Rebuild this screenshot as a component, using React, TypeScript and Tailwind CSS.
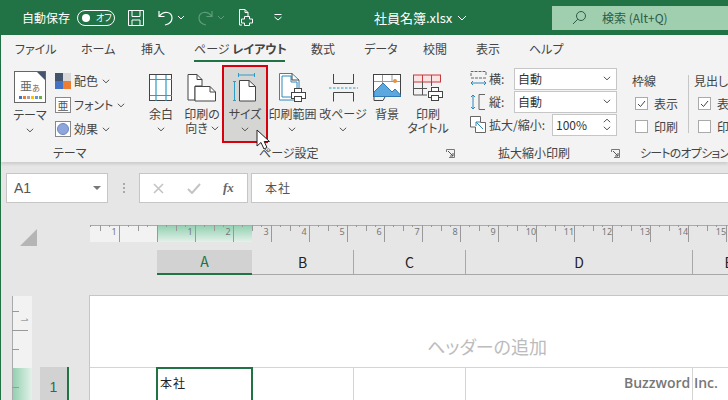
import type { ReactNode } from 'react';

const FONT = 'font-["Noto_Sans_CJK_JP","Noto_Sans",sans-serif] [font-feature-settings:"palt"]';

function Chevron({ className = '' }: { className?: string }) {
  return (
    <svg width="8" height="5" viewBox="0 0 8 5" className={className}>
      <polyline points="0.8,0.8 4,3.8 7.2,0.8" fill="none" stroke="#555" strokeWidth="1" />
    </svg>
  );
}

function Launcher() {
  return (
    <svg width="9" height="9" viewBox="0 0 9 9" className="ml-auto">
      <path d="M0.5 3V0.5H8.5V8.5H3" fill="none" stroke="#777" />
      <path d="M2 2L7 7M7 4V7H4" fill="none" stroke="#555" />
    </svg>
  );
}

function Stroke({ children, w, h }: { children: ReactNode; w: number; h: number }) {
  return (
    <svg width={w} height={h} viewBox={`0 0 ${w} ${h}`} fill="none">
      {children}
    </svg>
  );
}

function MarginIcon() {
  return (
    <Stroke w={24} h={28}>
      <rect x="0.5" y="0.5" width="22" height="26" fill="#fff" stroke="#444" />
      <path d="M7 1V27M17 1V27M1 5.5H23M1 21.5H23" stroke="#2e9cc4" strokeWidth="1.2" />
    </Stroke>
  );
}

function OrientIcon() {
  return (
    <Stroke w={30} h={28}>
      <path d="M1 0.5H10L15 5.5V12H8V26H1Z" fill="#fff" stroke="#444" />
      <path d="M8 12.5H23L28.5 18V27H8Z" fill="#fff" stroke="#444" />
      <path d="M10 0.5V5.5H15M23 12.5V18H28.5" stroke="#444" />
    </Stroke>
  );
}

function SizeIcon() {
  return (
    <Stroke w={24} h={29}>
      <path d="M5.5 0V4M21.5 0V4M5.5 2H21.5" stroke="#2e9cc4" />
      <path d="M1.5 8V28M0 8.5H3M0 27.5H3" stroke="#2e9cc4" />
      <path d="M6.5 7.5H16L22.5 13.5V28H6.5Z" fill="#fff" stroke="#444" />
      <path d="M16 7.5V13.5H22.5" stroke="#444" />
    </Stroke>
  );
}

function PrinterGlyph({ x, y }: { x: number; y: number }) {
  return (
    <g transform={`translate(${x} ${y})`}>
      <rect x="3.5" y="0.5" width="7" height="4" fill="#fff" stroke="#444" />
      <rect x="0.5" y="4.5" width="14" height="6" fill="#fff" stroke="#444" />
      <rect x="3.5" y="8.5" width="7" height="5" fill="#fff" stroke="#444" />
    </g>
  );
}

function AreaIcon() {
  return (
    <Stroke w={28} h={29}>
      <path d="M0.5 0.5H13L20 7V27H0.5Z" fill="#fff" stroke="#2e88b8" />
      <path d="M3 3H12V9H18V24H3Z" fill="#fff" stroke="#2e88b8" />
      <path d="M13 0.5V7H20" stroke="#444" />
      <PrinterGlyph x={12} y={15} />
    </Stroke>
  );
}

function BreakIcon() {
  return (
    <Stroke w={30} h={28}>
      <path d="M5.5 0V9.5H25.5V0M5.5 27.5V18.5H25.5V27.5" stroke="#444" />
      <path d="M1 14H30" stroke="#2e9cc4" strokeDasharray="2.5 1.5" />
    </Stroke>
  );
}

function BackgroundIcon() {
  return (
    <Stroke w={29} h={27}>
      <rect x="0.5" y="0.5" width="27" height="22" fill="#fff" stroke="#444" />
      <path d="M9.5 1V18M19 1V8M1 7.5H27" stroke="#999" />
      <circle cx="22" cy="7" r="2" fill="#e8913a" />
      <path d="M1 18L10 9L19 18L22 15L27.5 21V22.5H1Z" fill="#5ba7de" stroke="#2f79b5" />
      <path d="M1 23V26.5H10L12 23" stroke="#444" />
    </Stroke>
  );
}

function TitlesIcon() {
  return (
    <Stroke w={30} h={28}>
      <rect x="0.5" y="1" width="27" height="7" fill="#fbe3e3" stroke="#c8393c" />
      <path d="M9.5 1V8M18.5 1V8" stroke="#c8393c" />
      <path d="M0.5 8V21H14M9.5 8V21M18.5 8V12M1 14.5H14" stroke="#555" />
      <PrinterGlyph x={15} y={13} />
    </Stroke>
  );
}

function ThemeThumb() {
  const colors = ['#4472c4', '#e87d37', '#a5a5a5', '#ffc000', '#5b9bd5', '#70ad47'];
  return (
    <div className="relative flex h-[32px] w-[32px] flex-col items-center justify-end border border-[#666] bg-white p-[2px] pb-[3px]">
      <span className="absolute right-0 top-0 h-0 w-0 border-l-[8px] border-t-[8px] border-l-transparent border-t-[#44546a]" />
      <span className="mb-[1px] text-[12px] leading-[14px] whitespace-nowrap text-[#666]">
        亜<span className="text-[8px]">あ</span>
      </span>
      <div className="flex gap-[1px]">
        {colors.map((color) => (
          <span key={color} className="h-[3px] w-[3px]" style={{ backgroundColor: color }} />
        ))}
      </div>
    </div>
  );
}

function ColorsIcon() {
  return (
    <div className="grid h-[16px] w-[16px] grid-cols-2 grid-rows-2">
      <span className="bg-[#44546a]" />
      <span className="bg-[#d9d9d9]" />
      <span className="bg-[#4472c4]" />
      <span className="bg-[#ed7d31]" />
    </div>
  );
}

function FontIcon() {
  return (
    <div className="flex h-[16px] w-[16px] items-center justify-center border border-[#888] bg-white text-[11px] leading-none text-[#555]">
      亜
    </div>
  );
}

function EffectIcon() {
  return (
    <div className="flex h-[16px] w-[16px] items-center justify-center border border-[#888] bg-white">
      <span className="h-[12px] w-[12px] rounded-full border border-[#6f86c0] bg-[#8ea6dc]" />
    </div>
  );
}

function SmallItem({ icon, label }: { icon: ReactNode; label: string }) {
  return (
    <div className="flex h-[24px] items-center whitespace-nowrap">
      <span className="w-[19px]">{icon}</span>
      <span className="text-[12px] text-[#444]">{label}</span>
      <Chevron className="ml-[4px]" />
    </div>
  );
}

function RibbonButton({
  width,
  icon,
  lines,
  inlineChevron,
  noChevron,
  active,
}: {
  width: number;
  icon: ReactNode;
  lines: string[];
  inlineChevron?: boolean;
  noChevron?: boolean;
  active?: boolean;
}) {
  return (
    <div
      className={
        active
          ? 'flex h-[78px] flex-col items-center border-2 border-[#d9000d] bg-[#d5d5d4] pt-[6px]'
          : 'flex h-[78px] flex-col items-center pt-[8px]'
      }
      style={{ width }}
    >
      <div className="flex h-[29px] items-center justify-center">{icon}</div>
      <div className="mt-[5px] flex flex-col items-center text-[12px] leading-[14px] whitespace-nowrap text-[#444]">
        {lines.map((line, index) => (
          <span key={line} className="flex items-center gap-[3px]">
            {line}
            {inlineChevron && index === lines.length - 1 ? <Chevron /> : null}
          </span>
        ))}
        {!inlineChevron && !noChevron ? <Chevron className="mt-[6px]" /> : null}
      </div>
    </div>
  );
}

function GroupLabel({ label, launcher, className = '' }: { label: string; launcher?: boolean; className?: string }) {
  return (
    <div className={`mt-[3px] flex h-[14px] items-center text-[12px] leading-[14px] whitespace-nowrap text-[#444] ${className}`}>
      <span>{label}</span>
      {launcher ? <Launcher /> : null}
    </div>
  );
}

function Divider() {
  return <div className="mt-[7px] h-[89px] w-px bg-[#c6c6c6]" />;
}

function ScaleRow({ icon, label, labelWidth, children }: { icon: ReactNode; label: string; labelWidth: number; children: ReactNode }) {
  return (
    <div className="flex h-[23px] items-center">
      <span className="flex w-[19px] justify-start">{icon}</span>
      <span className="text-[12px] whitespace-nowrap text-[#444]" style={{ width: labelWidth }}>
        {label}
      </span>
      {children}
    </div>
  );
}

function Combo() {
  return (
    <div className="flex h-[22px] w-[103px] items-center justify-between border border-[#c6c6c6] bg-white pl-[3px] pr-[5px] text-[12px] text-[#333]">
      自動
      <Chevron />
    </div>
  );
}

function CheckOption({ label, checked }: { label: string; checked?: boolean }) {
  return (
    <div className="flex h-[23px] items-center gap-[6px]">
      <span className="flex h-[13px] w-[13px] items-center justify-center border border-[#aaa] bg-white">
        {checked ? (
          <svg width="9" height="8" viewBox="0 0 9 8">
            <path d="M1 4L3.5 6.5L8 1" fill="none" stroke="#444" />
          </svg>
        ) : null}
      </span>
      <span className="text-[12px] whitespace-nowrap text-[#444]">{label}</span>
    </div>
  );
}

function Ruler() {
  const step = 37.9;
  const zero = 67;
  const items = Array.from({ length: 25 }, (_, i) => i - 2);
  return (
    <svg width="638" height="17" className="block">
      <defs>
        <linearGradient id="rulerGreen" x1="0" y1="0" x2="0" y2="1">
          <stop offset="0" stopColor="#8fcfae" />
          <stop offset="1" stopColor="#e4f1ea" />
        </linearGradient>
      </defs>
      <rect width="67" height="17" fill="#f2f2f2" />
      <rect x="67" width="95" height="17" fill="url(#rulerGreen)" />
      <path d="M0 0.5H638" stroke="#aaa" />
      {items.map((n) => {
        const x = Math.round(zero + n * step);
        const half = Math.round(x + step / 2);
        const q1 = Math.round(x + step / 4);
        const q3 = Math.round(x + (3 * step) / 4);
        return (
          <g key={n}>
            <path d={`M${x + 0.5} 0V17`} stroke="#999" />
            <path d={`M${half + 0.5} 0V6M${q1 + 0.5} 0V2M${q3 + 0.5} 0V2`} stroke="#999" />
            {n !== 0 ? (
              <text x={x - 5} y={10} textAnchor="middle" fontSize="9" fill="#777" fontFamily="Noto Sans">
                {Math.abs(n)}
              </text>
            ) : null}
          </g>
        );
      })}
    </svg>
  );
}

function VerticalRuler() {
  return (
    <svg width="20" height="105" className="block">
      <defs>
        <linearGradient id="rulerGreenV" x1="0" y1="0" x2="1" y2="0">
          <stop offset="0" stopColor="#8fcfae" />
          <stop offset="1" stopColor="#e4f1ea" />
        </linearGradient>
      </defs>
      <rect width="20" height="72" fill="#f2f2f2" />
      <rect y="72" width="20" height="33" fill="url(#rulerGreenV)" />
      <path d="M0.5 0V105" stroke="#aaa" />
      <path d="M0 15.5H7M0 34.5H16M0 53.5H7M0 91.5H7" stroke="#999" />
      <text x="0" y="0" transform="translate(9 24) rotate(90)" textAnchor="middle" fontSize="8" fill="#777" fontFamily="Noto Sans">
        1
      </text>
    </svg>
  );
}

function ColumnHeader({ label, width, active }: { label: string; width: number; active?: boolean }) {
  return (
    <div
      className={
        active
          ? 'flex h-[25px] shrink-0 items-center justify-center border-b-2 border-[#217346] bg-[#d2d2d2] text-[14px] text-[#217346]'
          : 'flex h-[25px] shrink-0 items-center justify-center border-r border-b border-[#a8a8a8] text-[14px] text-[#222]'
      }
      style={{ width }}
    >
      {label}
    </div>
  );
}

function HandCursor() {
  return (
    <svg width="18" height="24" viewBox="0 0 18 24" className="absolute left-[256px] top-[129px]">
      <path d="M1 1V17L5 13.5L8 20L11 18.5L8.2 12.5H13.5Z" fill="#fff" stroke="#222" />
      <path d="M9 20L12 23L15 21" fill="none" stroke="#777" />
    </svg>
  );
}

export default function App() {
  return (
    <div className={`relative flex h-[400px] w-[728px] flex-col overflow-hidden bg-[#e6e6e6] ${FONT}`}>
      {/* title bar */}
      <div className="flex h-[35px] shrink-0 items-center bg-[#217346] pl-[22px] text-white">
        <span className="w-[48px] text-[12px] whitespace-nowrap">自動保存</span>
        <div className="ml-[7px] flex h-[16px] w-[38px] items-center rounded-full border border-white pl-[4px]">
          <span className="h-[8px] w-[8px] rounded-full bg-white" />
          <span className="ml-[6px] text-[9px] leading-none">オフ</span>
        </div>
        <svg width="16" height="16" viewBox="0 0 16 16" className="ml-[13px]">
          <path d="M0.5 0.5H15.5V15.5H0.5ZM4 0.5V6.5H12V0.5M4 15.5V10H12V15.5" fill="none" stroke="#fff" />
        </svg>
        <svg width="15" height="16" viewBox="0 0 15 16" className="ml-[14px]">
          <path d="M1 1V6.5H6.5M1.5 6C6 0 14 2 14 8C14 12 11 14 7 15" fill="none" stroke="#fff" strokeWidth="1.2" />
        </svg>
        <svg width="8" height="5" viewBox="0 0 8 5" className="ml-[4px]">
          <polyline points="1,1 4,4 7,1" fill="none" stroke="#fff" />
        </svg>
        <svg width="15" height="16" viewBox="0 0 15 16" className="ml-[13px]">
          <path d="M14 1V6.5H8.5M13.5 6C9 0 1 2 1 8C1 12 4 14 8 15" fill="none" stroke="#5f9c7c" strokeWidth="1.2" />
        </svg>
        <svg width="8" height="5" viewBox="0 0 8 5" className="ml-[4px]">
          <polyline points="1,1 4,4 7,1" fill="none" stroke="#5f9c7c" />
        </svg>
        <svg width="15" height="17" viewBox="0 0 15 17" className="ml-[13px]">
          <path d="M1.5 16V0.5H7L10 3.5V7M7 0.5V3.5H10M1.5 16H4" fill="none" stroke="#fff" />
          <path d="M6.5 7.5H11.5V10H14.5V14H11.5V16.5H6.5V14H3.5V10H6.5Z" fill="none" stroke="#fff" />
        </svg>
        <svg width="8" height="7" viewBox="0 0 8 7" className="ml-[21px]">
          <path d="M0.5 0.5H7.5M0.5 3L4 6L7.5 3" fill="none" stroke="#fff" />
        </svg>
        <span className="ml-[92px] flex items-center gap-[5px] text-[13px] whitespace-nowrap">
          社員名簿.xlsx
          <svg width="10" height="6" viewBox="0 0 10 6">
            <polyline points="1,1 5,5 9,1" fill="none" stroke="#fff" />
          </svg>
        </span>
        <div className="ml-auto flex h-[24px] w-[176px] items-center bg-[#a0cfb0] pl-[20px] text-[12px] text-[#2d5c43]">
          <svg width="15" height="15" viewBox="0 0 15 15">
            <circle cx="9" cy="6" r="4.5" fill="none" stroke="#2d5c43" />
            <path d="M5.8 9.2L1 14" stroke="#2d5c43" />
          </svg>
          <span className="ml-[15px] whitespace-nowrap">検索 (Alt+Q)</span>
        </div>
      </div>

      <div className="flex flex-1 flex-col border-l border-[#217346]">
        {/* tabs */}
        <div className="flex h-[27px] shrink-0 items-start bg-[#f3f3f3] pl-[14px] pt-[5px] text-[12px] leading-[18px] whitespace-nowrap text-[#444]">
          <span className="w-[66px]">ファイル</span>
          <span className="w-[60px]">ホーム</span>
          <span className="w-[53px]">挿入</span>
          <span className="flex h-[22px] w-[117px] items-start">
            <span className="w-[91px] border-b-[2px] border-[#217346] pb-[2px]">
              ページ <span className="font-bold">レイアウト</span>
            </span>
          </span>
          <span className="w-[53px]">数式</span>
          <span className="w-[59px]">データ</span>
          <span className="w-[53px]">校閲</span>
          <span className="w-[53px]">表示</span>
          <span>ヘルプ</span>
        </div>

        {/* ribbon */}
        <div className="flex h-[100px] shrink-0 overflow-hidden bg-[#f3f3f3] shadow-[0_2px_3px_rgba(0,0,0,0.12)]">
          <div className="flex w-[131px] shrink-0 flex-col pt-[3px]">
            <div className="flex h-[78px]">
              <div className="ml-[13px] mt-[6px] flex w-[32px] flex-col items-center">
                <ThemeThumb />
                <span className="mt-[5px] text-[12px] leading-[14px] whitespace-nowrap text-[#444]">テーマ</span>
                <Chevron className="mt-[6px]" />
              </div>
              <div className="ml-[9px] mt-[4px] flex flex-col">
                <SmallItem icon={<ColorsIcon />} label="配色" />
                <SmallItem icon={<FontIcon />} label="フォント" />
                <SmallItem icon={<EffectIcon />} label="効果" />
              </div>
            </div>
            <GroupLabel label="テーマ" className="pl-[52px]" />
          </div>
          <Divider />

          <div className="flex w-[325px] shrink-0 flex-col pt-[3px]">
            <div className="flex h-[78px] pl-[8px]">
              <RibbonButton width={42} icon={<MarginIcon />} lines={['余白']} />
              <RibbonButton width={40} icon={<OrientIcon />} lines={['印刷の', '向き']} inlineChevron />
              <RibbonButton width={46} icon={<SizeIcon />} lines={['サイズ']} active />
              <RibbonButton width={49} icon={<AreaIcon />} lines={['印刷範囲']} />
              <RibbonButton width={52} icon={<BreakIcon />} lines={['改ページ']} />
              <RibbonButton width={36} icon={<BackgroundIcon />} lines={['背景']} noChevron />
              <RibbonButton width={46} icon={<TitlesIcon />} lines={['印刷', 'タイトル']} noChevron />
            </div>
            <GroupLabel label="ページ設定" launcher className="pl-[127px] pr-[2px]" />
          </div>
          <Divider />

          <div className="flex w-[165px] shrink-0 flex-col pt-[5px]">
            <div className="flex h-[76px] flex-col pl-[13px]">
              <ScaleRow
                icon={
                  <Stroke w={17} h={16}>
                    <path d="M1 5V0.5H16V5M1 7H16" stroke="#666" strokeDasharray="3 1" />
                    <path d="M1 12H16M3 10L1 12L3 14M14 10L16 12L14 14" stroke="#2e88b8" />
                  </Stroke>
                }
                label="横:"
                labelWidth={25}
              >
                <Combo />
              </ScaleRow>
              <ScaleRow
                icon={
                  <Stroke w={16} h={16}>
                    <path d="M3 1V15M1 3L3 1L5 3M1 13L3 15L5 13" stroke="#2e88b8" />
                    <path d="M15 0.5H9V15.5H15" stroke="#666" />
                  </Stroke>
                }
                label="縦:"
                labelWidth={25}
              >
                <Combo />
              </ScaleRow>
              <ScaleRow
                icon={
                  <Stroke w={16} h={17}>
                    <path d="M0.5 0.5H10.5V6.5H15.5V16.5H5.5V11H0.5Z" fill="#fff" stroke="#666" />
                    <path d="M6 6L13 13M6 10V6H10" stroke="#2e88b8" />
                  </Stroke>
                }
                label="拡大/縮小:"
                labelWidth={63}
              >
                <div className="flex h-[22px] w-[65px] items-center justify-between border border-[#c6c6c6] bg-white pl-[3px] pr-[5px] text-[12px] text-[#333]">
                  100%
                  <span className="flex flex-col gap-[3px]">
                    <Chevron className="rotate-180" />
                    <Chevron />
                  </span>
                </div>
              </ScaleRow>
            </div>
            <GroupLabel label="拡大縮小印刷" launcher className="pl-[41px] pr-[2px]" />
          </div>
          <Divider />

          <div className="flex flex-1 flex-col pt-[3px]">
            <div className="flex h-[78px] pl-[10px]">
              <div className="flex w-[56px] flex-col pt-[8px]">
                <span className="text-[12px] leading-[16px] text-[#444]">枠線</span>
                <div className="mt-[3px] pl-[3px]">
                  <CheckOption label="表示" checked />
                  <CheckOption label="印刷" />
                </div>
              </div>
              <div className="mr-[5px] mt-[10px] h-[58px] w-px bg-[#c6c6c6]" />
              <div className="flex flex-col pt-[8px]">
                <span className="text-[12px] leading-[16px] whitespace-nowrap text-[#444]">見出し</span>
                <div className="mt-[3px] pl-[4px]">
                  <CheckOption label="表示" checked />
                  <CheckOption label="印刷" />
                </div>
              </div>
            </div>
            <GroupLabel label="シートのオプション" className="pl-[18px] tracking-[-0.8px]" />
          </div>
        </div>

        {/* formula bar */}
        <div className="mt-[11px] flex h-[30px] shrink-0 items-center pl-[5px]">
          <div className="flex h-[30px] w-[102px] items-center justify-between border border-[#c6c6c6] bg-white pl-[7px] pr-[6px] font-['Liberation_Sans'] text-[14px] text-[#555]">
            A1
            <span className="h-0 w-0 border-x-[4px] border-t-[4px] border-x-transparent border-t-[#777]" />
          </div>
          <div className="ml-[15px] flex flex-col gap-[2px]">
            <span className="h-[2px] w-[2px] bg-[#aaa]" />
            <span className="h-[2px] w-[2px] bg-[#aaa]" />
            <span className="h-[2px] w-[2px] bg-[#aaa]" />
          </div>
          <div className="ml-[14px] flex h-[30px] w-[109px] items-center border border-[#c6c6c6] bg-white pl-[13px]">
            <svg width="11" height="11" viewBox="0 0 11 11">
              <path d="M1 1L10 10M10 1L1 10" stroke="#c4c4c4" strokeWidth="1.6" />
            </svg>
            <svg width="14" height="11" viewBox="0 0 14 11" className="ml-[23px]">
              <path d="M1 6L5 10L13 1" fill="none" stroke="#c4c4c4" strokeWidth="2" />
            </svg>
            <span className="ml-[22px] font-['Liberation_Serif'] text-[13px] font-bold text-[#666] italic">fx</span>
          </div>
          <div className="ml-[3px] flex h-[30px] flex-1 items-center border-y border-l border-[#c6c6c6] bg-white pl-[13px] text-[12px] tracking-[1px] text-[#555]">
            本社
          </div>
        </div>

        {/* ruler */}
        <div className="mt-[22px] flex h-[17px] shrink-0">
          <div className="ml-[19px] mt-[4px] h-0 w-0 border-b-[17px] border-l-[17px] border-b-[#b5b5b5] border-l-transparent" />
          <div className="ml-[53px]">
            <Ruler />
          </div>
        </div>

        {/* column headers */}
        <div className="mt-[8px] flex h-[25px] shrink-0 pl-[156px]">
          <ColumnHeader label="A" width={95} active />
          <ColumnHeader label="B" width={102} />
          <ColumnHeader label="C" width={112} />
          <ColumnHeader label="D" width={227} />
          <ColumnHeader label="E" width={72} />
        </div>

        {/* page */}
        <div className="mt-[20px] flex min-h-0 flex-1 overflow-hidden">
          <div className="ml-[11px] mt-px">
            <VerticalRuler />
          </div>
          <div className="ml-[8px] mt-[72px] flex h-[40px] w-[29px] shrink-0 items-center justify-center border-r-2 border-[#217346] bg-[#d2d2d2] font-['Liberation_Sans'] text-[14px] text-[#217346]">
            1
          </div>
          <div className="ml-[20px] flex flex-1 flex-col border-t border-l border-[#c6c6c6] bg-white">
            <div className="flex h-[71px] shrink-0 items-end justify-center pb-[9px] pl-[156px] text-[18px] leading-[24px] text-[#bcbcbc]">
              ヘッダーの追加
            </div>
            <div className="flex flex-1 border-t border-[#d4d4d4]">
              <div className="-mt-px ml-[66px] h-[40px] w-[97px] shrink-0 border-2 border-[#217346] pl-[2px] pt-[5px] text-[12px] leading-[18px] tracking-[1px] text-[#222]">
                本社
              </div>
              <div className="w-[101px] shrink-0 border-r border-[#d4d4d4]" />
              <div className="w-[112px] shrink-0 border-r border-[#d4d4d4]" />
              <div className="w-[227px] shrink-0 border-r border-[#d4d4d4]" />
              <div className="flex-1" />
            </div>
            <span className="absolute left-[624px] top-[374px] font-['Open_Sans'] text-[14px] leading-[18px] font-semibold whitespace-nowrap text-[#777]">
              Buzzword Inc.
            </span>
          </div>
        </div>
      </div>
      <HandCursor />
    </div>
  );
}
